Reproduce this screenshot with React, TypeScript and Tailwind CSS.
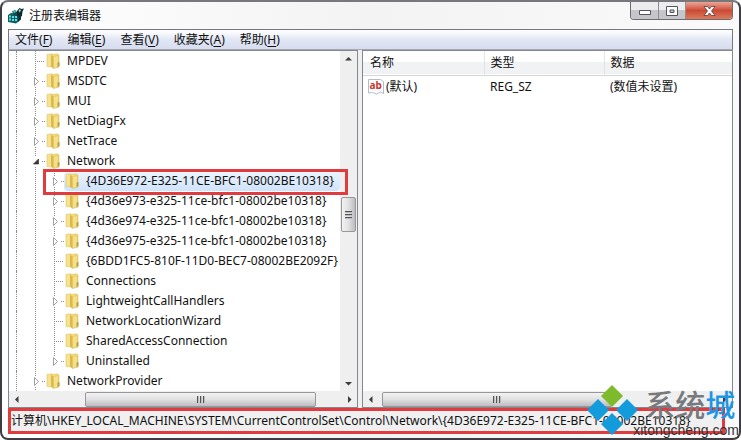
import clsx from "clsx";

interface TreeItem {
  name: string;
  level: 1 | 2;
  state: "open" | "closed" | "leaf";
  last?: boolean;
  selected?: boolean;
}

const MENUS = [
  { label: "文件", hotkey: "F" },
  { label: "编辑", hotkey: "E" },
  { label: "查看", hotkey: "V" },
  { label: "收藏夹", hotkey: "A" },
  { label: "帮助", hotkey: "H" },
];

const TREE: TreeItem[] = [
  { name: "MPDEV", level: 1, state: "leaf" },
  { name: "MSDTC", level: 1, state: "closed" },
  { name: "MUI", level: 1, state: "closed" },
  { name: "NetDiagFx", level: 1, state: "closed" },
  { name: "NetTrace", level: 1, state: "closed" },
  { name: "Network", level: 1, state: "open" },
  { name: "{4D36E972-E325-11CE-BFC1-08002BE10318}", level: 2, state: "closed", selected: true },
  { name: "{4d36e973-e325-11ce-bfc1-08002be10318}", level: 2, state: "closed" },
  { name: "{4d36e974-e325-11ce-bfc1-08002be10318}", level: 2, state: "closed" },
  { name: "{4d36e975-e325-11ce-bfc1-08002be10318}", level: 2, state: "closed" },
  { name: "{6BDD1FC5-810F-11D0-BEC7-08002BE2092F}", level: 2, state: "leaf" },
  { name: "Connections", level: 2, state: "leaf" },
  { name: "LightweightCallHandlers", level: 2, state: "closed" },
  { name: "NetworkLocationWizard", level: 2, state: "leaf" },
  { name: "SharedAccessConnection", level: 2, state: "leaf" },
  { name: "Uninstalled", level: 2, state: "closed", last: true },
  { name: "NetworkProvider", level: 1, state: "closed" },
];

function FolderIcon() {
  return (
    <svg width="16" height="16" viewBox="0 0 16 16" className="shrink-0">
      <path d="M2 1.5 6.500.8 8 2v12L2 13.500z" fill="#f6e28c" stroke="#dcc468" strokeWidth=".6" />
      <path d="M6.500 1.500 12.500.8 14 2v12l-6 1z" fill="#f3dc7c" stroke="#d9bd58" strokeWidth=".5" />
      <path d="M6 2 8.500 3.500v12L6 13.500z" fill="#dcb84e" />
      <path d="M8.500 3.500 13.500 2.500v11.500l-5 1.500z" fill="#f5e08a" stroke="#d8b850" strokeWidth=".5" />
      <path d="M12.500 9.500 14.500 9v4l-2 1z" fill="#b3a04c" />
    </svg>
  );
}

function Branch({ item }: { item: TreeItem }) {
  const { state, last } = item;
  return (
    <svg width="19" height="20" viewBox="0 0 19 20" className="shrink-0">
      <g stroke="#8a8a8a" strokeDasharray="1 1" fill="none">
        {state === "leaf" ? (
          <path d="M9.5 0V20M11 10.5H19" />
        ) : (
          <>
            <path d="M9.5 0V5M16 10.5H19" />
            {!last && <path d="M9.5 16V20" />}
          </>
        )}
      </g>
      {state === "closed" && <path d="M8.5 6.5v8l4-4z" fill="#fff" stroke="#a0a0a0" />}
      {state === "open" && <path d="M12.500 8v5H7.500z" fill="#3c3c3c" stroke="#1e1e1e" strokeWidth=".6" />}
    </svg>
  );
}

function TreeRow({ item }: { item: TreeItem }) {
  return (
    <li className="flex h-5 items-center">
      <span className="ml-[7px] h-5 w-[10px] shrink-0 border-l border-dotted border-[#8a8a8a]" />
      {item.level === 2 && (
        <svg width="19" height="20" viewBox="0 0 19 20" className="shrink-0">
          <path d="M9.5 0V20" stroke="#8a8a8a" strokeDasharray="1 1" />
        </svg>
      )}
      <Branch item={item} />
      <button
        className={clsx(
          "flex h-5 items-center gap-1.5 whitespace-nowrap text-left",
          item.selected && "grow rounded-sm bg-gradient-to-b from-[#eef5fd] to-[#cfe3fb]"
        )}
      >
        <FolderIcon />
        {item.name}
      </button>
    </li>
  );
}

const ARROWS = {
  up: "M4 9.5 7.5 6 11 9.5z",
  down: "M4 6 7.5 9.5 11 6z",
  left: "M9.5 4 6 7.5 9.5 11z",
  right: "M6 4 9.5 7.5 6 11z",
};

function ScrollArrow({ dir }: { dir: keyof typeof ARROWS }) {
  return (
    <button aria-label={dir} className="flex size-[15px] shrink-0 items-center justify-center">
      <svg width="15" height="15" viewBox="0 0 15 15">
        <path d={ARROWS[dir]} fill="#3d3d3d" />
      </svg>
    </button>
  );
}

function HScrollbar({ first, thumb }: { first: string; thumb: string }) {
  return (
    <div className="flex h-4 shrink-0 items-center bg-[#efefef]">
      <ScrollArrow dir="left" />
      <div className={first} />
      <div
        className={clsx(
          "flex h-[15px] items-center justify-center gap-px rounded-xs border border-[#979797] bg-gradient-to-b from-[#f3f3f3] via-[#e0e0e2] to-[#bdbdc1]",
          thumb
        )}
      >
        <span className="h-[7px] w-[2px] border-l border-[#555] bg-[#bbb]" />
        <span className="h-[7px] w-[2px] border-l border-[#555] bg-[#bbb]" />
        <span className="h-[7px] w-[2px] border-l border-[#555] bg-[#bbb]" />
      </div>
      <div className="grow" />
      <ScrollArrow dir="right" />
    </div>
  );
}

function VScrollbar() {
  return (
    <div className="flex w-[17px] shrink-0 flex-col items-center bg-[#efefef]">
      <ScrollArrow dir="up" />
      <div className="grow-[131]" />
      <div className="flex h-[35px] w-[15px] flex-col items-center justify-center gap-px rounded-xs border border-[#979797] bg-gradient-to-r from-[#f3f3f3] via-[#e0e0e2] to-[#bdbdc1]">
        <span className="h-[2px] w-[7px] border-t border-[#555] bg-[#bbb]" />
        <span className="h-[2px] w-[7px] border-t border-[#555] bg-[#bbb]" />
        <span className="h-[2px] w-[7px] border-t border-[#555] bg-[#bbb]" />
      </div>
      <div className="grow-[144]" />
      <ScrollArrow dir="down" />
    </div>
  );
}

function AppIcon() {
  return (
    <svg width="17" height="17" viewBox="0 0 17 17" className="shrink-0">
      <path d="M0 8 3 6l8 1v7l-3 2.500-8-1.500z" fill="#0d5f66" />
      <path d="M1 8.500h2v2H1zM4 9h2v2H4zM1 11.500h2v2H1zM4 12h2v2H4zM7 9h2v2H7zM7 12h2v2H7z" fill="#5fe0dc" />
      <path d="M4 4.500 7 3l2 2v4L6 8z" fill="#0f4a52" />
      <path d="M5 4.500 7 3.500l1 1.500-2 1z" fill="#4fd0cc" />
      <path d="M9 4l2.500-3 2 1 2.500-.5-1.500 3L14 9l-3 2-2-2z" fill="#12292e" />
      <path d="M10.500 3.500 12 2l1 1.500-1.500 2z" fill="#7fecea" />
      <path d="M10 11l3-2v3.500L10 15z" fill="#0a3238" />
    </svg>
  );
}

function StringIcon() {
  return (
    <svg width="16" height="16" viewBox="0 0 16 16" className="shrink-0">
      <path d="M.5.500h12l3 2v12l-3-1.500-4 2-4-1.500-4 .5z" fill="#fdfdfd" stroke="#b4bccb" />
      <text x="1.500" y="10" fontSize="10" fontWeight="700" fontFamily="Noto Sans" fill="#c8382c">
        ab
      </text>
    </svg>
  );
}

function TitleBar() {
  return (
    <header className="flex h-[27px] shrink-0 items-start">
      <h1 className="flex h-[27px] items-center gap-1">
        <AppIcon />
        注册表编辑器
      </h1>
      <div className="ml-auto flex h-[18px] overflow-hidden rounded-b-[4px] border border-t-0 border-[#6b6b70]">
        <button aria-label="最小化" className="flex w-7 items-center justify-center border-r border-[#8d8d92] bg-gradient-to-b from-[#ececee] from-45% to-[#c6c6ca] to-50%">
          <svg width="12" height="12" viewBox="0 0 12 12">
            <path d="M.5 5.500h11v4H.5z" fill="#fff" stroke="#55555c" />
          </svg>
        </button>
        <button aria-label="最大化" className="flex w-[27px] items-center justify-center border-r border-[#8d8d92] bg-gradient-to-b from-[#ececee] from-45% to-[#c6c6ca] to-50%">
          <svg width="12" height="12" viewBox="0 0 12 12">
            <path d="M.5 1.500h11v9H.5zM4 5v2.500h4V5z" fill="#fff" fillRule="evenodd" stroke="#55555c" />
          </svg>
        </button>
        <button aria-label="关闭" className="flex w-[46px] items-center justify-center bg-gradient-to-b from-[#e9a596] via-[#cb4a35] via-50% to-[#dc7a5c]">
          <svg width="13" height="12" viewBox="0 0 13 12">
            <path d="M1 1.500h3.500l2 2.500 2-2.500H12L8.500 6l3.500 4.500H8.500l-2-2.500-2 2.500H1L4.500 6z" fill="#fff" stroke="#5a3a3a" strokeWidth=".8" />
          </svg>
        </button>
      </div>
    </header>
  );
}

function MenuBar() {
  return (
    <nav className="flex h-[21px] shrink-0 items-center gap-[15px] border border-[#77777d] border-b-[#a8a8b0] bg-gradient-to-b from-[#fbfcfe] from-10% via-[#e2e7f4] via-50% to-[#d6ddf0] px-1.5">
      {MENUS.map((menu) => (
        <button key={menu.hotkey}>
          {menu.label}(<u className="underline-offset-2">{menu.hotkey}</u>)
        </button>
      ))}
    </nav>
  );
}

function ValueList() {
  return (
    <table className="w-full table-fixed border-collapse text-left">
      <thead>
        <tr className="h-6 border-b border-[#d5d5d8] bg-gradient-to-b from-white from-45% to-[#f1f2f4] to-50%">
          <th className="w-[121px] border-r border-[#e2e3e6] pl-[7px] font-normal">名称</th>
          <th className="w-[120px] border-r border-[#e2e3e6] pl-[6px] font-normal">类型</th>
          <th className="pl-[6px] font-normal">数据</th>
        </tr>
      </thead>
      <tbody>
        <tr className="h-6">
          <td className="pl-[5px]">
            <span className="flex items-center gap-0.5">
              <StringIcon />
              (默认)
            </span>
          </td>
          <td className="pl-[6px]">REG_SZ</td>
          <td className="pl-[6px]">(数值未设置)</td>
        </tr>
      </tbody>
    </table>
  );
}

function Watermark() {
  return (
    <div className="absolute right-0 bottom-0 flex items-start">
      <svg width="52" height="54" viewBox="0 0 52 54" className="shrink-0">
        <path d="M25 1 36 12 25 23 14 12z" fill="#7dbb2c" />
        <path d="M11 15 22 26 11 37 0 26zM40 15 51 26 40 37 29 26zM25 29 36 40 25 51 14 40z" fill="#149bdc" />
      </svg>
      <div className="-ml-1.5 pt-1.5 font-['Liberation_Sans','Noto_Sans_CJK_SC',sans-serif]">
        <p className="flex pl-3 text-[30px] leading-8 font-medium text-[#77797c]">
          系统<span className="text-[#1e96e6]">城</span>
        </p>
        <p className="text-sm leading-4 text-[#333]">xitongcheng.com</p>
      </div>
    </div>
  );
}

export default function App() {
  return (
    <div className="relative flex h-screen flex-col overflow-hidden rounded-lg border-2 border-[#3c3c42] border-t-[#77777c] bg-gradient-to-r from-white via-[#f3f3f4] to-[#fafafa] px-1.5 pb-1 font-['Noto_Sans','Noto_Sans_CJK_SC',sans-serif] text-[12px] leading-4 text-[#111]">
      <TitleBar />
      <MenuBar />
      <main className="flex min-h-0 flex-1 gap-1 bg-[#f0f0f0]">
        <section className="flex w-[350px] shrink-0 flex-col border border-[#828790]">
          <div className="relative flex min-h-0 flex-1">
            <ul className="min-w-0 flex-1 overflow-hidden bg-white">
              {TREE.map((item) => (
                <TreeRow key={item.name} item={item} />
              ))}
            </ul>
            <VScrollbar />
            <div className="pointer-events-none absolute top-[118px] right-[9px] left-[34px] h-[26px] border-3 border-[#e03c40]" />
          </div>
          <HScrollbar first="w-[61px]" thumb="w-[231px]" />
        </section>
        <section className="flex min-w-0 flex-1 flex-col border border-[#828790] bg-white">
          <div className="flex-1">
            <ValueList />
          </div>
          <HScrollbar first="w-1" thumb="w-[230px]" />
        </section>
      </main>
      <footer className="mr-2 flex h-[26px] shrink-0 items-center border-3 border-[#e03c40] bg-[#f0f0f0] whitespace-nowrap">
        {"计算机\\HKEY_LOCAL_MACHINE\\SYSTEM\\CurrentControlSet\\Control\\Network\\{4D36E972-E325-11CE-BFC1-08002BE10318}"}
      </footer>
      <Watermark />
    </div>
  );
}
